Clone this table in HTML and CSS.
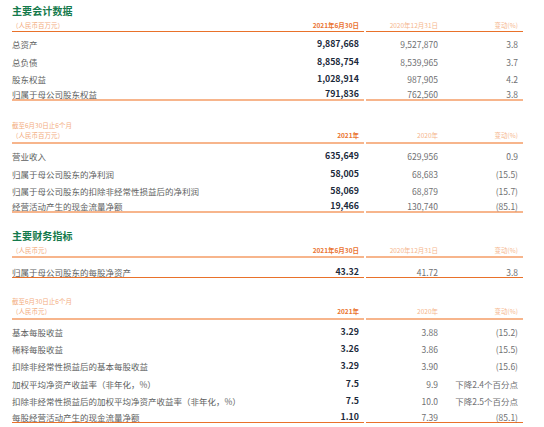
FILE: index.html
```html
<!DOCTYPE html>
<html lang="zh-CN">
<head>
<meta charset="utf-8">
<link rel="stylesheet" href="styles.css">
</head>
<body>
<div class="page">
  <section class="sec s1">
    <h2 class="title">主要会计数据</h2>
    <div class="row head dark">
      <div class="l"><span class="lab unit">（人民币百万元）</span><span class="v1 hc">2021年6月30日</span></div>
      <div class="r"><span class="v2 hp">2020年12月31日</span><span class="v3 hp">变动(%)</span></div>
    </div>
    <div class="row data"><div class="l"><span class="lab">总资产</span><span class="v1">9,887,668</span></div><div class="r"><span class="v2">9,527,870</span><span class="v3">3.8</span></div></div>
    <div class="row data"><div class="l"><span class="lab">总负债</span><span class="v1">8,858,754</span></div><div class="r"><span class="v2">8,539,965</span><span class="v3">3.7</span></div></div>
    <div class="row data"><div class="l"><span class="lab">股东权益</span><span class="v1">1,028,914</span></div><div class="r"><span class="v2">987,905</span><span class="v3">4.2</span></div></div>
    <div class="row data last light"><div class="l"><span class="lab">归属于母公司股东权益</span><span class="v1">791,836</span></div><div class="r"><span class="v2">762,560</span><span class="v3">3.8</span></div></div>
  </section>

  <section class="sec s2">
    <div class="row head2 light">
      <div class="l"><span class="lab unit">截至6月30日止6个月<br>（人民币百万元）</span><span class="v1 hc">2021年</span></div>
      <div class="r"><span class="v2 hp">2020年</span><span class="v3 hp">变动(%)</span></div>
    </div>
    <div class="row data"><div class="l"><span class="lab">营业收入</span><span class="v1">635,649</span></div><div class="r"><span class="v2">629,956</span><span class="v3">0.9</span></div></div>
    <div class="row data"><div class="l"><span class="lab">归属于母公司股东的净利润</span><span class="v1">58,005</span></div><div class="r"><span class="v2">68,683</span><span class="v3">(15.5)</span></div></div>
    <div class="row data"><div class="l"><span class="lab">归属于母公司股东的扣除非经常性损益后的净利润</span><span class="v1">58,069</span></div><div class="r"><span class="v2">68,879</span><span class="v3">(15.7)</span></div></div>
    <div class="row data last light"><div class="l"><span class="lab">经营活动产生的现金流量净额</span><span class="v1">19,466</span></div><div class="r"><span class="v2">130,740</span><span class="v3">(85.1)</span></div></div>
  </section>

  <section class="sec s3">
    <h2 class="title">主要财务指标</h2>
    <div class="row head light">
      <div class="l"><span class="lab unit">（人民币元）</span><span class="v1 hc">2021年6月30日</span></div>
      <div class="r"><span class="v2 hp">2020年12月31日</span><span class="v3 hp">变动(%)</span></div>
    </div>
    <div class="row data tall last dark"><div class="l"><span class="lab">归属于母公司股东的每股净资产</span><span class="v1">43.32</span></div><div class="r"><span class="v2">41.72</span><span class="v3">3.8</span></div></div>
  </section>

  <section class="sec s4">
    <div class="row head2 light">
      <div class="l"><span class="lab unit">截至6月30日止6个月<br>（人民币元）</span><span class="v1 hc">2021年</span></div>
      <div class="r"><span class="v2 hp">2020年</span><span class="v3 hp">变动(%)</span></div>
    </div>
    <div class="row data"><div class="l"><span class="lab">基本每股收益</span><span class="v1">3.29</span></div><div class="r"><span class="v2">3.88</span><span class="v3">(15.2)</span></div></div>
    <div class="row data"><div class="l"><span class="lab">稀释每股收益</span><span class="v1">3.26</span></div><div class="r"><span class="v2">3.86</span><span class="v3">(15.5)</span></div></div>
    <div class="row data"><div class="l"><span class="lab">扣除非经常性损益后的基本每股收益</span><span class="v1">3.29</span></div><div class="r"><span class="v2">3.90</span><span class="v3">(15.6)</span></div></div>
    <div class="row data"><div class="l"><span class="lab">加权平均净资产收益率（非年化，%）</span><span class="v1">7.5</span></div><div class="r"><span class="v2">9.9</span><span class="v3">下降2.4个百分点</span></div></div>
    <div class="row data"><div class="l"><span class="lab">扣除非经常性损益后的加权平均净资产收益率（非年化，%）</span><span class="v1">7.5</span></div><div class="r"><span class="v2">10.0</span><span class="v3">下降2.5个百分点</span></div></div>
    <div class="row data last dark"><div class="l"><span class="lab">每股经营活动产生的现金流量净额</span><span class="v1">1.10</span></div><div class="r"><span class="v2">7.39</span><span class="v3">(85.1)</span></div></div>
  </section>
</div>
</body>
</html>
```

FILE: styles.css
```css
* { box-sizing: border-box; }
html, body { margin: 0; padding: 0; background: #ffffff; }
body {
  font-family: "Noto Sans CJK SC", "Noto Sans", sans-serif;
  color: #5a5b5d;
  width: 544px;
  height: 427px;
  overflow: hidden;
}
.page { padding: 5px 21px 0 12px; }

.title {
  margin: 0;
  font-size: 10px;
  line-height: 12px;
  font-weight: 700;
  color: #157a4c;
  letter-spacing: 0.1px;
}

.row { display: flex; gap: 2px; }
.l { width: 352px; display: flex; align-items: flex-end; }
.r { width: 157px; display: flex; align-items: flex-end; }
.lab { flex: 1; white-space: nowrap; }
.v1 { padding-right: 5px; text-align: right; white-space: nowrap; }
.v2 { width: 72px; text-align: right; white-space: nowrap; }
.v3 { flex: 1; text-align: right; padding-right: 5px; white-space: nowrap; }

.head .l, .head .r {
  padding: 4px 0 2px;
  font-size: 6.5px;
  line-height: 8px;
}
.head2 .l, .head2 .r {
  padding: 0 0 2px;
  font-size: 6.5px;
  line-height: 10px;
}
.unit { color: #f3ad80; }
.hc { color: #ea7431; font-weight: 700; }
.hp { color: #f5b68d; }

.dark .l, .dark .r { border-bottom: 1px solid #e9712a; }
.light .l, .light .r { border-bottom: 2px solid #f7b58c; }

.data .l, .data .r {
  height: 17.25px;
  padding-top: 6px;
  font-size: 8.5px;
  line-height: 10px;
}
.data .lab { color: #5e5f61; }
.data .v1 { color: #1c2a3b; font-weight: 700; font-size: 8.8px; }
.data .v2 { color: #6f7072; }
.data .v3 { color: #6f7072; }
.data.tall .l, .data.tall .r { height: 20px; padding-top: 8px; }

.s2 { margin-top: 19px; }
.s3 { margin-top: 17px; }
.s4 { margin-top: 18px; }
.s4 .data .l, .s4 .data .r { height: 17.17px; }
```
